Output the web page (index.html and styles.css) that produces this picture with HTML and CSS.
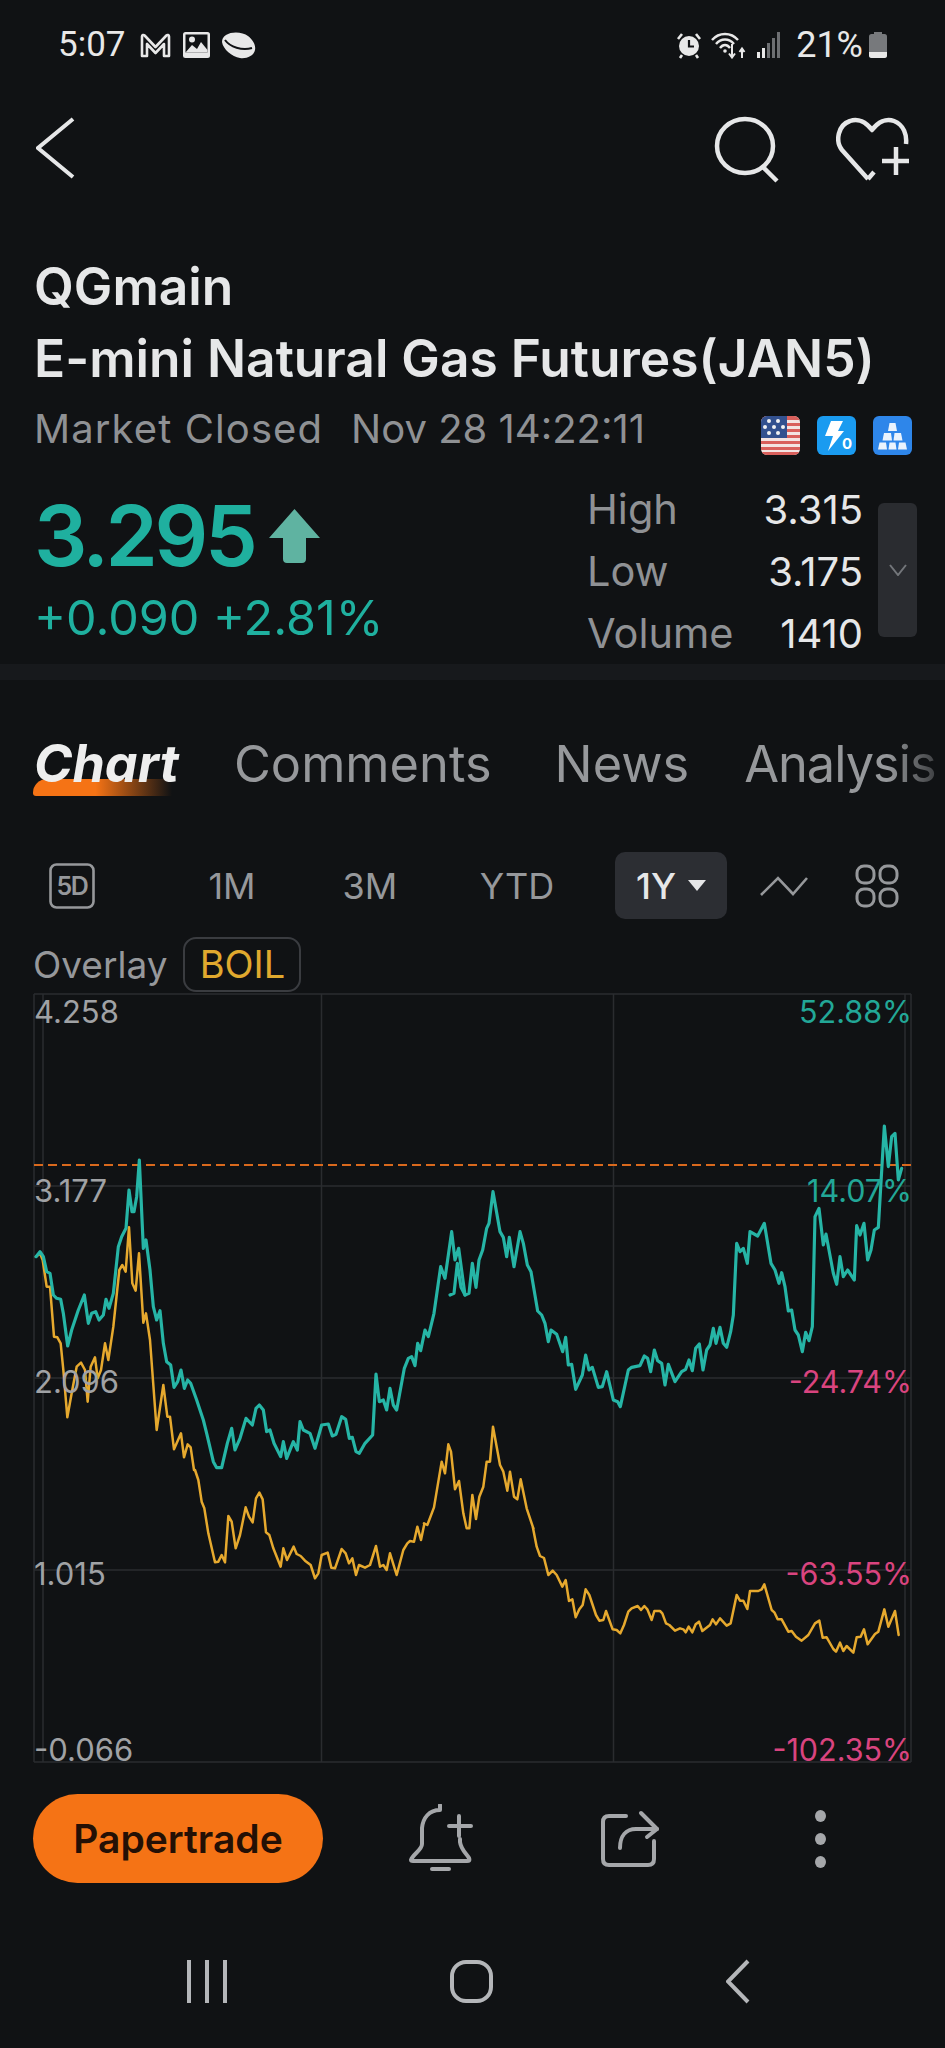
FILE: index.html
```html
<!DOCTYPE html>
<html lang="en">
  <head>
    <meta charset="UTF-8" />
    <meta name="viewport" content="width=device-width, initial-scale=1.0" />
    <title>QGmain</title>
    <link rel="stylesheet" href="styles.css">
  </head>
  <body>
    <div class="statusbar">
      <div class="status-left">
        <span class="clock">5:07</span>
        <svg class="st-icon" width="31" height="25" viewBox="0 0 31 25"><path d="M2 23V3.500C2 2 3.600 1.500 4.600 2.500L15.500 14 26.400 2.500C27.400 1.500 29 2 29 3.500V23H24V11L15.500 20 7 11V23Z" fill="none" stroke="#e8e8e8" stroke-width="2.600" stroke-linejoin="round"/></svg>
        <svg class="st-icon" width="27" height="26" viewBox="0 0 27 26"><rect x="0" y="0" width="27" height="26" rx="2.500" fill="#e8e8e8"/><rect x="2.500" y="2.500" width="22" height="18" fill="#101214"/><circle cx="9" cy="7.500" r="3" fill="#e8e8e8"/><path d="M2.500 20.500 9 13 14 17 18 10 24.500 18V20.500Z" fill="#e8e8e8"/></svg>
        <svg class="st-icon" width="34" height="27" viewBox="0 0 34 27"><path d="M4 3C10-1 21 0 26 4 31 8 34 13 33 18 32 24 24 27 18 26 10 25 1 17 0 10 0 7 1 5 4 3Z" fill="#e8e8e8"/><path d="M3 8C8 15 20 19 30 16" fill="none" stroke="#101214" stroke-width="2"/></svg>
      </div>
      <div class="status-right">
        <svg class="st-icon" width="26" height="27" viewBox="0 0 26 27"><circle cx="13" cy="14" r="10" fill="#e8e8e8"/><path d="M13 8V14.500H18" fill="none" stroke="#101214" stroke-width="2.200"/><path d="M2 7 6 2M24 7 20 2M6 23 4 26M20 23 22 26" stroke="#e8e8e8" stroke-width="2.600"/></svg>
        <svg class="st-icon wifi" width="37" height="28" viewBox="0 0 37 28"><g fill="none" stroke="#e8e8e8" stroke-width="2.400"><path d="M1 9C8 1 20 1 27 9"/><path d="M5 13C10 7 18 7 23 13"/><path d="M9 17C12 13 16 13 19 17"/></g><circle cx="14" cy="20" r="1.800" fill="#e8e8e8"/><path d="M21 13V26M18 22.500 21 26.500 24 22.500M31 27V18M28.500 21 31 17.500 33.500 21" fill="none" stroke="#e8e8e8" stroke-width="2"/></svg>
        <svg class="st-icon signal" width="24" height="26" viewBox="0 0 24 26"><rect x="0" y="20" width="3" height="6" fill="#e8e8e8"/><rect x="5" y="16" width="3" height="10" fill="#e8e8e8"/><rect x="10" y="11" width="3" height="15" fill="#6d6f72"/><rect x="15" y="6" width="3" height="20" fill="#6d6f72"/><rect x="20" y="0" width="3" height="26" fill="#6d6f72"/></svg>
        <span class="battery-pct">21%</span>
        <svg class="st-icon" width="18" height="26" viewBox="0 0 18 26"><rect x="5" y="0" width="8" height="3" fill="#77797c"/><rect x="0" y="2" width="18" height="24" rx="2.500" fill="#77797c"/><path d="M0 20H18V23.500C18 25 17 26 15.500 26H2.500C1 26 0 25 0 23.500Z" fill="#e8e8e8"/></svg>
      </div>
    </div>

    <div class="topbar">
      <svg width="40" height="64" viewBox="0 0 40 64"><path d="M37 3 2 32 37 61" fill="none" stroke="#e6e7e8" stroke-width="4"/></svg>
      <div class="topbar-right">
        <svg width="68" height="68" viewBox="0 0 68 68"><ellipse cx="31" cy="30" rx="28" ry="27" fill="none" stroke="#e6e7e8" stroke-width="4.500"/><path d="M49 51 63 65" stroke="#e6e7e8" stroke-width="4.500"/></svg>
        <svg width="74" height="66" viewBox="0 0 74 66"><path d="M32 62 6 33C-1 24 2 8 14 4 22 1 30 5 36 13 42 5 50 1 58 4 68 8 71 18 70 27M32 62 38 55" fill="none" stroke="#e6e7e8" stroke-width="4.500" stroke-linejoin="round"/><path d="M60 30V58M46 44H73" stroke="#e6e7e8" stroke-width="4.500"/></svg>
      </div>
    </div>

    <div class="title-block">
      <div class="title">QGmain</div>
      <div class="title">E-mini Natural Gas Futures(JAN5)</div>
    </div>

    <div class="meta">
      <div class="meta-text">
        <span class="meta-state">Market Closed</span>
        <span>Nov 28 14:22:11</span>
      </div>
      <div class="badges">
        <svg width="39" height="39" viewBox="0 0 39 39"><defs><clipPath id="flagClip"><rect width="39" height="39" rx="6"/></clipPath></defs><g clip-path="url(#flagClip)"><rect width="39" height="39" fill="#f3e4e2"/><g fill="#d9605c"><rect y="0" width="39" height="4"/><rect y="7" width="39" height="3"/><rect y="13" width="39" height="3"/><rect y="19" width="39" height="3"/><rect y="25" width="39" height="3"/><rect y="31" width="39" height="3"/><rect y="36" width="39" height="3"/></g><rect width="26" height="22" fill="#33518f"/><g fill="#f2f2f2"><circle cx="8" cy="5" r="2"/><circle cx="17" cy="5" r="2"/><circle cx="4" cy="11" r="2"/><circle cx="13" cy="11" r="2"/><circle cx="22" cy="11" r="2"/><circle cx="8" cy="17" r="2"/><circle cx="17" cy="17" r="2"/></g></g></svg>
        <svg width="39" height="39" viewBox="0 0 39 39"><rect width="39" height="39" rx="6" fill="#1a9bf0"/><path d="M14 5H26L21 15H27L11 35 16 20H8Z" fill="#fff"/><text class="badge-zero" x="25" y="33">0</text></svg>
        <svg width="39" height="39" viewBox="0 0 39 39"><rect width="39" height="39" rx="6" fill="#2e86ea"/><g fill="#eaf3fd"><path d="M16.500 7H22.500L24 15H15Z"/><path d="M11 17H18L19 24.500H9.500Z"/><path d="M21.500 17H28L29.500 24.500H20.500Z"/><path d="M6.500 26.500H13L14 33.500H5Z"/><path d="M16.500 26.500H22.500L23.500 33.500H15.500Z"/><path d="M26 26.500H32.500L34 33.500H25Z"/></g></svg>
      </div>
    </div>

    <div class="quote">
      <div class="quote-left">
        <div class="price-row">
          <span class="price">3.295</span>
          <svg class="price-arrow" width="51" height="54" viewBox="0 0 51 54"><path d="M25.500 0 51 29H37V50C37 52.500 35.500 54 33 54H18C15.500 54 14 52.500 14 50V29H0Z" fill="#5fb3a1"/></svg>
        </div>
        <div class="change">+0.090 +2.81%</div>
      </div>
      <div class="stats">
        <div class="stat-row"><span>High</span><b>3.315</b></div>
        <div class="stat-row"><span>Low</span><b>3.175</b></div>
        <div class="stat-row"><span>Volume</span><b>1410</b></div>
      </div>
      <div class="expand">
        <svg width="18" height="12" viewBox="0 0 18 12"><path d="M1 1 9 11 17 1" fill="none" stroke="#73767a" stroke-width="2"/></svg>
      </div>
    </div>

    <div class="band"></div>

    <div class="tabs">
      <span class="tab active">Chart</span>
      <span class="tab">Comments</span>
      <span class="tab tab-news">News</span>
      <span class="tab fade">Analysis</span>
    </div>

    <div class="range">
      <div class="range-icon">
        <svg width="46" height="46" viewBox="0 0 46 46"><rect x="1.500" y="1.500" width="43" height="43" rx="6" fill="none" stroke="#96989b" stroke-width="2.600"/><text class="icon-5d" x="23" y="32">5D</text></svg>
      </div>
      <span class="range-item r1m">1M</span>
      <span class="range-item r3m">3M</span>
      <span class="range-item rytd">YTD</span>
      <div class="range-pill"><span>1Y</span><i class="caret"></i></div>
      <svg class="range-line" width="48" height="36" viewBox="0 0 48 36"><path d="M1 27 18 10 33 26 47 10" fill="none" stroke="#96989b" stroke-width="2.600"/></svg>
      <svg class="range-grid" width="44" height="44" viewBox="0 0 44 44"><g fill="none" stroke="#96989b" stroke-width="3"><rect x="2" y="2" width="17" height="17" rx="7"/><rect x="25" y="2" width="17" height="17" rx="7"/><rect x="2" y="25" width="17" height="17" rx="7"/><rect x="25" y="25" width="17" height="17" rx="7"/></g></svg>
    </div>

    <div class="overlay-row">
      <span class="overlay-label">Overlay</span>
      <span class="overlay-chip">BOIL</span>
    </div>

    <svg class="chart" width="945" height="780" viewBox="0 990 945 780">
      <!-- grid -->
      <g class="grid-lines">
        <path d="M34 994H911M34 1186H911M34 1378H911M34 1570H911M34 1762H911"/>
        <path d="M34 994V1762M43 994V1762M321.500 994V1762M613.500 994V1762M905 994V1762M911 994V1762"/>
      </g>
      <path class="last-price" d="M34 1165H911"/>

      <!-- overlay line, traced in pieces from crops of the chart -->
      <g class="line-gold">
        <polyline transform="translate(0 1100) scale(.33333)" points="108,470 120,460 128,480 140,560 150,560 162,710 172,712 182,730 190,810 202,952 215,880 230,800 243,788 255,810 263,905 272,800 285,772 293,835 303,810 315,730 325,780 340,680 358,510 367,495 377,515 387,382 397,550 407,572 417,460 430,668 438,640 450,720 470,990 490,855 502,950 510,950 522,1048 543,1000 552,1072 563,1033 572,1042 582,1110"/>
        <polyline transform="translate(190 1470) scale(.33333)" points="15,0 25,30 35,95 43,115 55,190 75,277 85,275 95,255 105,277 115,138 125,155 137,235 150,195 167,112 177,140 188,157 198,85 208,68 218,88 228,187 238,195 250,235 272,290 280,235 291,270 311,230 320,252 332,258 345,272 362,285 375,325 385,310 395,255 413,248 424,293 435,295 455,237 467,250 477,280 487,265 498,315 507,285 525,293 540,285 558,228 570,290 580,285 590,300 600,250 620,315 640,240 652,220 660,213 672,215 682,170 693,210 703,162"/>
        <polyline transform="translate(420 1420) scale(.33333)" points="12,310 22,315 42,262 65,125 75,160 85,73 93,95 105,208 117,183 130,280 140,325 148,325 157,225 168,297 178,230 190,200 200,125 210,125 219,20 240,135 250,155 262,212 270,155 282,230 292,238 302,178 320,265 340,325"/>
        <polyline transform="translate(540 1530) scale(.33333)" points="-21,-6 -10,50 0,78 12,84 25,135 38,122 50,135 67,170 77,150 87,213 97,208 107,262 118,238 128,225 137,178 148,195 168,255 178,272 190,270 198,243 218,298 230,300 241,310 252,285 265,245 275,235 293,228 303,240 313,228 322,238 335,270 343,243 360,243 367,250 378,280 388,285 405,302 420,295 430,298 437,307 446,290 457,307 467,283 477,275 487,303 510,285 518,268 528,283 540,265 560,287 572,280 590,195 600,212 610,212 622,237 630,183 655,183 665,178 673,163 695,240 703,247 713,268 725,268 745,305 755,303 768,320 785,332 805,315 825,280 838,272 848,323 860,322 880,357 888,365 900,338 910,363 920,348 940,368 950,322 962,320 972,298 983,343 1005,312 1015,305 1033,238 1045,290 1065,243 1076,315"/>
      </g>

      <g class="line-teal">
        <polyline transform="translate(0 1100) scale(.33333)" points="108,470 120,455 130,470 140,515 150,520 160,585 170,595 182,598 190,640 203,738 215,690 235,630 253,585 265,670 275,640 287,635 297,660 310,645 318,598 327,625 340,580 355,440 365,410 378,385 387,270 396,335 402,335 410,290 418,180 430,445 438,420 450,510 460,620 470,660 480,632 490,730 500,785 512,795 522,862 533,845 543,810 553,865 563,840 572,850 590,900 610,960 620,1000 640,1085 650,1103 665,1103 682,1030 695,985 705,1050 720,1015 738,955 757,975 768,925 778,915 790,930 800,995 810,990 822,1030 842,1070 850,1025 860,1075 880,1025 892,1050 900,965 910,990 930,1000 945,1045 965,975 985,972 997,1008 1008,1003 1025,950 1037,958 1048,1015 1057,1012 1068,1055 1078,1060 1095,1030 1118,1005 1128,822 1138,905 1150,900 1160,930 1170,865 1180,915 1190,930 1213,805 1225,775 1235,770 1245,797 1253,730 1262,752 1275,690 1285,710 1302,640 1322,500 1335,535 1355,395 1365,480 1376,445 1395,585"/>
        <polyline transform="translate(465 1100) scale(.33333)" points="-45,585 -33,580 -23,490 -12,562 0,585 12,580 22,490 33,562 42,480 53,450 65,385 72,370 84,275 105,395 115,412 125,470 133,412 147,500 165,395 175,430 187,495 198,515 218,633 230,645 240,670 250,725 258,690 275,703 293,755 302,712 310,795 320,793 332,868 352,825 362,765 372,810 382,802 400,862 412,860 425,815 445,900 458,905 466,920 490,810 500,802 525,797 538,768 548,775 557,815 568,750 578,782 590,790 600,855 610,793 630,845 650,815 662,808 672,780 682,812 692,745 703,732 714,810 725,750 735,735 745,685 753,730 765,682 775,730 785,742 797,695 805,645 815,430 825,455 835,445 847,490 855,395 878,408 898,370 918,490 930,510 942,550 950,518 960,560 970,633 980,630 990,690 1000,705 1012,755 1022,697 1032,722 1042,680 1050,350 1062,325 1075,435 1083,402 1105,520 1115,553 1125,470 1135,530 1148,510 1168,540 1175,377 1185,405 1197,370 1208,480 1218,450 1228,390 1240,382 1258,78 1270,200 1280,110 1290,100 1300,240 1310,205"/>
      </g>

      <!-- axis labels -->
      <g class="axis-left">
        <text x="34" y="1023">4.258</text>
        <text x="34" y="1202">3.177</text>
        <text x="34" y="1393">2.096</text>
        <text x="34" y="1585">1.015</text>
        <text x="34" y="1761">-0.066</text>
      </g>
      <g class="axis-right">
        <text class="up" x="912" y="1023">52.88%</text>
        <text class="up" x="912" y="1202">14.07%</text>
        <text class="down" x="912" y="1393">-24.74%</text>
        <text class="down" x="912" y="1585">-63.55%</text>
        <text class="down" x="912" y="1761">-102.35%</text>
      </g>
    </svg>

    <div class="actions">
      <button class="trade-btn">Papertrade</button>
      <svg class="act-bell" width="64" height="68" viewBox="0 0 64 68"><g fill="none" stroke="#a5a7aa" stroke-width="4" stroke-linecap="round" stroke-linejoin="round"><path d="M31 1V6M31 6C20 6 14 14 13 24V40C13 46 4 50 2 56 2 57 3 57 4 57H58C60 57 61 57 60 54 58 50 52 46 51 38V35"/><path d="M23 65H40"/><path d="M50 12V32M40 22H62"/></g></svg>
      <svg class="act-share" width="60" height="58" viewBox="0 0 60 58"><g fill="none" stroke="#a5a7aa" stroke-width="4" stroke-linecap="round" stroke-linejoin="round"><path d="M26 6H9C5 6 3 8 3 12V49C3 53 5 55 9 55H48C52 55 54 53 54 49V31"/><path d="M20 38C20 26 26 19 36 19H57"/><path d="M41 3 57 19 47 27"/></g></svg>
      <div class="act-more"><i></i><i></i><i></i></div>
    </div>

    <div class="navbar">
      <svg width="40" height="43" viewBox="0 0 40 43"><path d="M2 0V43M20 0V43M38 0V43" stroke="#b4b6b9" stroke-width="4"/></svg>
      <svg class="nav-home" width="43" height="43" viewBox="0 0 43 43"><rect x="2" y="2" width="39" height="39" rx="14" fill="none" stroke="#b4b6b9" stroke-width="4"/></svg>
      <svg class="nav-back" width="24" height="45" viewBox="0 0 24 45"><path d="M22 2 2 22.500 22 43" fill="none" stroke="#b4b6b9" stroke-width="4"/></svg>
    </div>
  </body>
</html>
```
FILE: styles.css
```css
* {
  box-sizing: border-box;
}
html,
body {
  margin: 0;
  background: #101214;
}
body {
  width: 945px;
  height: 2048px;
  overflow: hidden;
  font-family: Inter, "Liberation Sans", sans-serif;
  color: #e6e7e8;
}
svg {
  display: block;
  flex: none;
}

/* status bar */
.statusbar {
  height: 92px;
  padding: 31px 58px 0;
  display: flex;
  justify-content: space-between;
  align-items: flex-start;
}
.status-left,
.status-right {
  display: flex;
  align-items: center;
  height: 28px;
}
.clock {
  font: 35px/28px Roboto, sans-serif;
  color: #e8e8e8;
  margin-right: 14px;
}
.status-left .st-icon {
  margin-right: 12px;
}
.status-right {
  gap: 9px;
}
.battery-pct {
  font: 36px/28px Roboto, sans-serif;
  color: #e8e8e8;
  margin-left: 6px;
  margin-right: -3px;
}

/* top bar */
.topbar {
  height: 158px;
  padding: 24px 36px 0;
  display: flex;
  justify-content: space-between;
  align-items: flex-start;
}
.topbar-right {
  display: flex;
  gap: 54px;
  align-items: center;
  margin-right: -1px;
}

/* title */
.title {
  font-size: 51.5px;
  font-weight: 600;
  line-height: 72px;
  padding-left: 34px;
  white-space: nowrap;
}
.meta {
  margin-top: 10px;
  height: 50px;
  padding: 0 33px 0 34px;
  display: flex;
  justify-content: space-between;
  align-items: center;
}
.meta-text {
  display: flex;
  gap: 28px;
  font-size: 40px;
  line-height: 50px;
  color: #8f9194;
}
.meta-state {
  letter-spacing: 1.1px;
}
.badges {
  display: flex;
  gap: 17px;
  margin-top: 13px;
}
.badge-zero {
  font: 700 15px Inter, sans-serif;
  fill: #fff;
}

/* quote */
.quote {
  margin-top: 24px;
  height: 186px;
  padding-left: 34px;
  display: flex;
}
.quote-left {
  width: 553px;
  padding-top: 8px;
}
.price-row {
  display: flex;
  align-items: center;
  gap: 15px;
  height: 100px;
}
.price {
  font-size: 84px;
  font-weight: 600;
  line-height: 100px;
  letter-spacing: -3.4px;
  color: #1fb09f;
}
.change {
  margin-top: 2px;
  font-size: 48.5px;
  line-height: 60px;
  color: #1fb09f;
  white-space: nowrap;
}
.stats {
  width: 276px;
}
.stat-row {
  display: flex;
  justify-content: space-between;
  align-items: baseline;
  height: 62px;
  line-height: 62px;
  font-size: 40px;
}
.stat-row span {
  font-size: 41.5px;
  color: #8f9194;
}
.stat-row b {
  font-weight: 400;
  color: #e6e7e8;
}
.expand {
  width: 39px;
  height: 134px;
  margin: 25px 0 0 15px;
  border-radius: 6px;
  background: #2a2c30;
  display: flex;
  align-items: center;
  justify-content: center;
}
.band {
  height: 16px;
  background: #17191c;
}

/* tabs */
.tabs {
  margin-top: 54px;
  padding-left: 34px;
  display: flex;
  gap: 55px;
  white-space: nowrap;
}
.tab {
  position: relative;
  font-size: 50.5px;
  line-height: 60px;
  color: #96989b;
}
.tab.active {
  z-index: 0;
  font-size: 52px;
  font-weight: 700;
  font-style: italic;
  color: #eeeeee;
}
.tab.active::before {
  content: "";
  position: absolute;
  left: -1px;
  bottom: -2px;
  width: 139px;
  height: 17px;
  border-radius: 14px 0 0 3px;
  background: linear-gradient(to right, #f57315 45%, rgba(245, 115, 21, 0));
  z-index: -1;
}
.tab-news {
  margin-left: 8px;
}
.tab.fade {
  letter-spacing: -1px;
  -webkit-mask-image: linear-gradient(to right, #000 75%, rgba(0, 0, 0, 0.35));
  mask-image: linear-gradient(to right, #000 75%, rgba(0, 0, 0, 0.35));
}

/* range selector */
.range {
  margin-top: 58px;
  height: 67px;
  padding-left: 49px;
  display: flex;
  align-items: center;
}
.range-icon {
  width: 119px;
}
.icon-5d {
  font: 600 25px Inter, sans-serif;
  letter-spacing: -1.5px;
  fill: #96989b;
  text-anchor: middle;
}
.range-item {
  font-size: 36px;
  color: #96989b;
  text-align: center;
}
.r1m {
  width: 128px;
}
.r3m {
  width: 148px;
}
.rytd {
  width: 146px;
}
.range-pill {
  width: 112px;
  height: 67px;
  margin-left: 25px;
  border-radius: 10px;
  background: #2c2e33;
  display: flex;
  align-items: center;
  gap: 12px;
  padding-left: 21px;
  font-size: 36px;
  font-weight: 500;
}
.caret {
  width: 0;
  height: 0;
  border-left: 9px solid transparent;
  border-right: 9px solid transparent;
  border-top: 11px solid #e6e7e8;
}
.range-line {
  margin-left: 33px;
}
.range-grid {
  margin-left: 47px;
}

/* overlay */
.overlay-row {
  margin-top: 18px;
  height: 55px;
  padding-left: 33px;
  display: flex;
  align-items: center;
  gap: 16px;
}
.overlay-label {
  font-size: 37px;
  color: #96989b;
}
.overlay-chip {
  height: 55px;
  width: 118px;
  border: 2px solid #3a3c40;
  border-radius: 13px;
  text-align: center;
  font-size: 38px;
  line-height: 51px;
  color: #e0a92e;
}

/* chart */
.chart {
  margin-top: -2px;
}
.grid-lines path {
  fill: none;
  stroke: #2a2c2f;
  stroke-width: 1.500;
}
.last-price {
  fill: none;
  stroke: #d9691d;
  stroke-width: 2;
  stroke-dasharray: 9 5;
}
.line-gold polyline {
  fill: none;
  stroke: #e6a92e;
  stroke-width: 7.500;
  stroke-linejoin: round;
  stroke-linecap: round;
}
.line-teal polyline {
  fill: none;
  stroke: #26b5a6;
  stroke-width: 9.500;
  stroke-linejoin: round;
  stroke-linecap: round;
}
.axis-left text,
.axis-right text {
  font-size: 31px;
  fill: #a0a2a5;
}
.axis-right text {
  font-size: 30.5px;
  text-anchor: end;
}
.axis-right .up {
  fill: #22a797;
}
.axis-right .down {
  fill: #d9447f;
}

/* bottom actions */
.actions {
  margin-top: 24px;
  height: 89px;
  padding-left: 33px;
  display: flex;
  align-items: center;
}
.trade-btn {
  width: 290px;
  height: 89px;
  border: 0;
  border-radius: 45px;
  background: #f57315;
  color: #241005;
  font: 600 39px Inter, sans-serif;
  padding: 0;
}
.act-bell {
  margin-left: 86px;
  margin-top: -2px;
}
.act-share {
  margin-left: 127px;
}
.act-more {
  margin-left: 155px;
  height: 58px;
  display: flex;
  flex-direction: column;
  justify-content: space-between;
}
.act-more i {
  display: block;
  width: 11px;
  height: 12px;
  border-radius: 50%;
  background: #a5a7aa;
}

/* android nav */
.navbar {
  margin-top: 76px;
  height: 45px;
  padding-left: 187px;
  display: flex;
  align-items: center;
}
.nav-home {
  margin-left: 223px;
}
.nav-back {
  margin-left: 233px;
}
```
